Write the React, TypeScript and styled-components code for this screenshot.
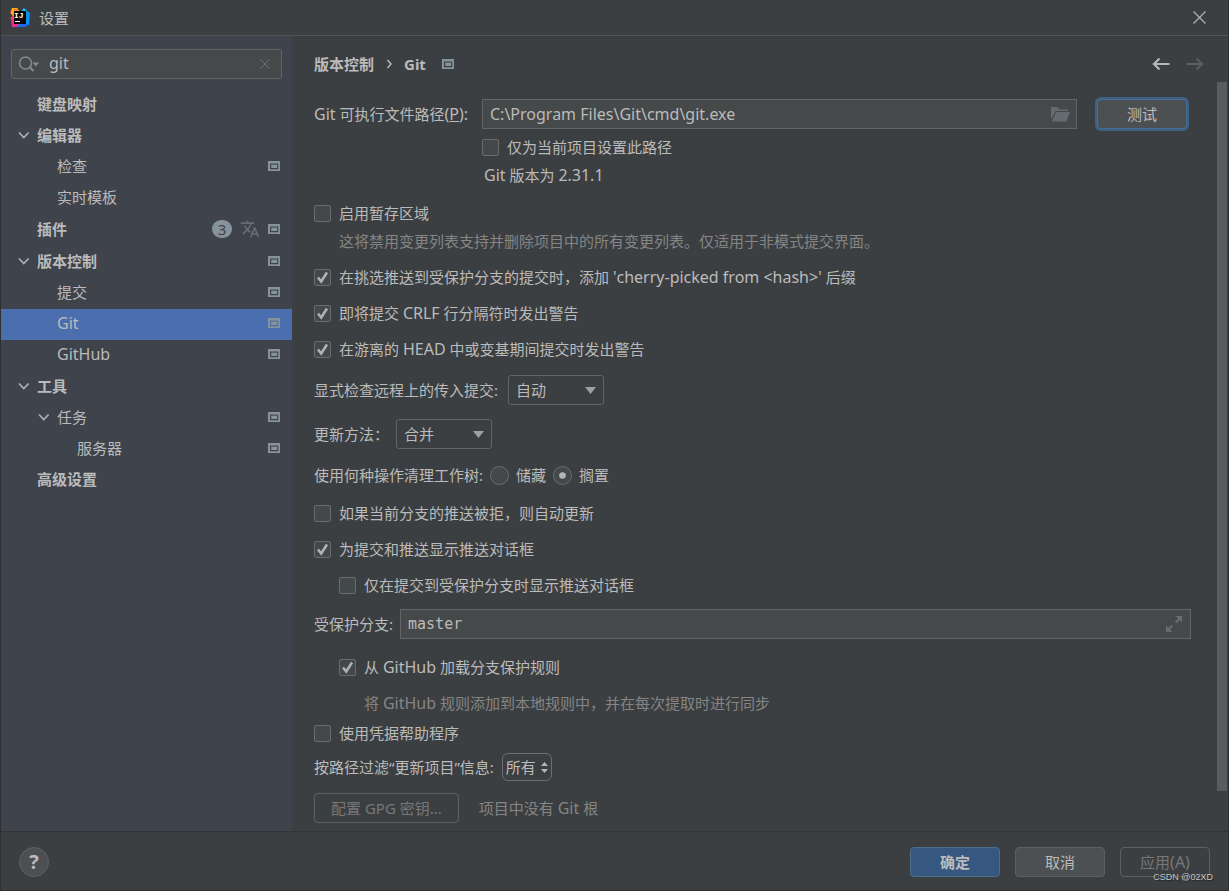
import React, { useId } from "react";
import styled, { createGlobalStyle } from "styled-components";
import { MdTranslate } from "react-icons/md";

const color = {
  bg: "#3c3f41",
  side: "#3f434c",
  field: "#45494a",
  border: "#646464",
  edge: "#2d2f30",
  text: "#bbbbbb",
  muted: "#858585",
  disabled: "#777777",
  icon: "#87939a",
  select: "#4b6eaf",
};

const GlobalStyle = createGlobalStyle`
  *, *::before, *::after { box-sizing: border-box; }
  body {
    margin: 0;
    background: ${color.bg};
    color: ${color.text};
    font-family: "Noto Sans", "Noto Sans CJK SC", sans-serif;
    font-size: 15px;
    line-height: 24px;
  }
  button, input, select { font: inherit; color: inherit; margin: 0; }
`;

const Window = styled.div`
  display: flex;
  flex-direction: column;
  min-height: 100vh;
  border: 1px solid ${color.edge};
  border-top: 0;
`;

const TitleBar = styled.header`
  display: flex;
  align-items: center;
  gap: 8px;
  height: 36px;
  padding: 0 22px 0 8px;
  border-bottom: 1px solid #515355;
`;

const Title = styled.h1`
  flex: 1;
  margin: 0;
  font-size: 15px;
  font-weight: 400;
`;

const IconButton = styled.button`
  display: flex;
  align-items: center;
  justify-content: center;
  padding: 0;
  border: 0;
  background: none;
`;

const Body = styled.div`
  display: flex;
  flex: 1;
`;

const Sidebar = styled.aside`
  flex: none;
  width: 291px;
  padding: 13px 0;
  background: ${color.side};
`;

const SearchBox = styled.div`
  display: flex;
  align-items: center;
  gap: 9px;
  height: 30px;
  margin: 0 10px 11px;
  padding: 0 11px 0 6px;
  border: 1px solid ${color.border};
  border-radius: 3px;
  background: ${color.field};
`;

const SearchInput = styled.input`
  flex: 1;
  min-width: 0;
  padding: 0 0 2px;
  border: 0;
  outline: 0;
  background: none;
  font-size: 16px;
`;

const Tree = styled.nav`
  display: flex;
  flex-direction: column;
  gap: 1px;
`;

const TreeRow = styled.a<{ $level: number; $bold?: boolean; $active?: boolean }>`
  display: flex;
  align-items: center;
  gap: 8px;
  height: 31px;
  padding: 0 12px 3px ${(p) => 16 + p.$level * 20}px;
  background: ${(p) => (p.$active ? color.select : "transparent")};
  color: inherit;
  font-weight: ${(p) => (p.$bold ? 700 : 400)};
  text-decoration: none;
`;

const TreeArrow = styled.span`
  display: flex;
  width: 12px;
`;

const TreeLabel = styled.span`
  flex: 1;
`;

const Latin = styled.span`
  font-size: 16px;
  line-height: 1;
`;

const CountBadge = styled.span`
  width: 20px;
  height: 18px;
  border-radius: 9px;
  background: ${color.icon};
  color: ${color.side};
  font-weight: 400;
  line-height: 18px;
  text-align: center;
`;

const Main = styled.main`
  display: flex;
  flex: 1;
  flex-direction: column;
  min-width: 0;
`;

const MainHeader = styled.div`
  display: flex;
  align-items: center;
  justify-content: space-between;
  height: 46px;
  padding: 10px 24px 0 22px;
`;

const Breadcrumb = styled.h2`
  display: flex;
  align-items: center;
  gap: 12px;
  margin: 0;
  font-size: 15px;
  font-weight: 700;

  svg:last-child { margin-left: 4px; }
`;

const NavButtons = styled.div`
  display: flex;
  gap: 16px;
`;

const ScrollArea = styled.div`
  display: flex;
  flex: 1;
`;

const ScrollThumb = styled.div`
  flex: none;
  width: 10px;
  height: calc(100% - 40px);
  margin-right: 1px;
  background: #595b5d;
`;

const Form = styled.form`
  display: flex;
  flex: 1;
  flex-direction: column;
  min-width: 0;
  padding: 17px 26px 8px 22px;
`;

const Row = styled.div<{ $top?: number; $indent?: number; $gap?: number }>`
  display: flex;
  align-items: center;
  gap: ${(p) => p.$gap ?? 8}px;
  min-height: 24px;
  margin-top: ${(p) => p.$top ?? 12}px;
  margin-left: ${(p) => p.$indent ?? 0}px;
`;

const PathLabel = styled.label`
  width: 160px;
`;

const Hint = styled.span`
  color: ${color.muted};
`;

const Field = styled.div<{ $end?: number }>`
  display: flex;
  flex: 1;
  align-items: center;
  height: 30px;
  padding: 0 ${(p) => p.$end ?? 8}px 0 7px;
  border: 1px solid ${color.border};
  background: ${color.field};
`;

const FieldInput = styled.input<{ $mono?: boolean }>`
  flex: 1;
  min-width: 0;
  padding: 0;
  border: 0;
  outline: 0;
  background: none;
  font-family: ${(p) => (p.$mono ? '"DejaVu Sans Mono", monospace' : "inherit")};
  font-size: ${(p) => (p.$mono ? 15 : 16)}px;
`;

const Button = styled.button<{ $kind?: "primary" | "focused" }>`
  min-width: 90px;
  height: 30px;
  padding: 0 16px;
  border: 1px solid ${(p) => (p.$kind === "primary" ? "#4c708c" : p.$kind === "focused" ? "#466d94" : "#5e6060")};
  border-radius: 4px;
  background: ${(p) => (p.$kind === "primary" ? "#365880" : "#4c5052")};
  box-shadow: ${(p) => (p.$kind === "focused" ? "0 0 0 2px #3d6185" : "none")};
  font-weight: ${(p) => (p.$kind === "primary" ? 700 : 400)};
  line-height: 22px;

  &:disabled {
    background: none;
    color: ${color.disabled};
  }
`;

const TestButton = styled(Button)`
  margin: 0 4px 0 12px;
`;

const Option = styled.label<{ $gap?: number }>`
  display: flex;
  align-items: center;
  gap: ${(p) => p.$gap ?? 8}px;
`;

const Mark = styled.span`
  display: grid;
  place-items: center;

  > * { grid-area: 1 / 1; }
  svg { visibility: hidden; pointer-events: none; }
  input:checked + svg { visibility: visible; }
`;

const MarkInput = styled.input`
  appearance: none;
  width: ${(p) => (p.type === "radio" ? 19 : 17)}px;
  height: ${(p) => (p.type === "radio" ? 19 : 17)}px;
  border: 1px solid #6b6b6b;
  border-radius: ${(p) => (p.type === "radio" ? "50%" : "2px")};
  background: #43494a;
`;

const SelectWrap = styled.span`
  display: grid;
  align-items: center;
  justify-items: end;

  > * { grid-area: 1 / 1; }
  svg { pointer-events: none; margin-right: 8px; }
`;

const Select = styled.select`
  appearance: none;
  width: 96px;
  height: 30px;
  padding: 0 7px;
  border: 1px solid ${color.border};
  border-radius: 3px;
  background: ${color.bg};
`;

const CompactWrap = styled(SelectWrap)`
  svg { margin-right: 4px; }
`;

const CompactSelect = styled(Select)`
  width: 50px;
  height: 28px;
  padding: 0 3px;
  border-color: #6e6e6e;
  border-radius: 6px;
`;

const Footer = styled.footer`
  display: flex;
  align-items: center;
  gap: 15px;
  padding: 15px 18px 13px;
  border-top: 1px solid #323436;
`;

const HelpButton = styled.button`
  width: 30px;
  height: 30px;
  margin-right: auto;
  padding: 0;
  border: 1px solid #5e6060;
  border-radius: 50%;
  background: #4c5052;
  font-size: 20px;
  font-weight: 700;
  line-height: 26px;
`;

const Watermark = styled.span`
  position: absolute;
  right: 16px;
  bottom: 8px;
  color: #c6c6c6;
  font-family: "Liberation Sans", Arial, sans-serif;
  font-size: 9px;
  line-height: 12px;
  text-shadow: 1px 1px 1px #222;
`;

const Logo = () => (
  <svg width="22" height="22" viewBox="0 0 22 22" aria-hidden="true">
    <path d="M3 1 8 1 12 6 8 18 3 17 4 13 1 11 4 9 1 6z" fill="#fc4b48" />
    <path d="M3 1 8 1 11 5 4 9 2 6z" fill="#fdb60d" />
    <path d="M5 2 9 2 8 6 4 8z" fill="#ff7a36" />
    <path d="M2 12 7 12 13 20 3 20z" fill="#ef2f8c" />
    <path d="M12 4 15 1 18 4 21 6 20 18 13 20 8 20 12 14z" fill="#0b8ff2" />
    <path d="M13 4 15 1 18 5z" fill="#19c5e8" />
    <path d="M8 20 12 17 20 17 16 20z" fill="#1769f3" />
    <rect x="5" y="4" width="12" height="13" fill="#0a0506" />
    <rect x="6" y="14" width="5" height="1" fill="#fff" />
    <text x="5" y="11" fill="#fff" fontFamily="Liberation Mono, monospace" fontSize="8" fontWeight="700">IJ</text>
  </svg>
);

const CloseIcon = ({ size = 12, stroke = "#b0b2b4" }) => (
  <svg width={size} height={size} viewBox="0 0 12 12" stroke={stroke} fill="none" aria-hidden="true">
    <path d="M.5.5l11 11M11.5.5l-11 11" strokeWidth="1.1" />
  </svg>
);

const SearchIcon = () => (
  <svg width="22" height="18" viewBox="0 0 22 18" fill="none" aria-hidden="true">
    <circle cx="7.500" cy="8" r="6" stroke="#7f8b91" strokeWidth="1.6" />
    <path d="M11.500 12l4 4" stroke="#7f8b91" strokeWidth="2.200" />
    <path d="M14.500 7.500h6.500l-3.200 4z" fill="#7f8b91" />
  </svg>
);

const ProjectIcon = () => (
  <svg width="12" height="10" viewBox="0 0 12 10" fill={color.icon} aria-hidden="true">
    <path fillRule="evenodd" d="M0 0h12v10H0zM2 2.400v5.800h8.300v-5.800z" />
    <path d="M3.200 3.600h6v3.400h-6z" />
  </svg>
);

const ArrowDown = () => (
  <svg width="12" height="8" viewBox="0 0 12 8" fill="none" overflow="visible" aria-hidden="true">
    <path d="M2 1.500l4.800 5 4.800-5" stroke="#afb1b3" strokeWidth="1.700" />
  </svg>
);

const Crumb = () => (
  <svg width="6" height="10" viewBox="0 0 6 10" fill="none" aria-hidden="true">
    <path d="M1.500 1l3.500 4L1.500 9" stroke="#bbb" strokeWidth="1.400" />
  </svg>
);

const BackArrow = () => (
  <svg width="18" height="14" viewBox="0 0 18 14" fill="none" stroke="#b4b6b8" strokeWidth="2.200" aria-hidden="true">
    <path d="M17.500 7H2.500M7.500 1.500L2 7l5.500 5.500" />
  </svg>
);

const ForwardArrow = () => (
  <svg width="18" height="14" viewBox="0 0 18 14" fill="none" stroke="#5b5d5f" strokeWidth="2.200" aria-hidden="true">
    <path d="M.5 7h15M10.500 1.500L16 7l-5.500 5.500" />
  </svg>
);

const FolderIcon = () => (
  <svg width="19" height="15" viewBox="0 0 19 15" fill="#656c6f" aria-hidden="true">
    <path d="M0 0h6.500l2 2.500H17V4H4.500L0 12.500z" />
    <path d="M5.200 5H19l-3.500 9.500H.8z" />
  </svg>
);

const ExpandIcon = () => (
  <svg width="16" height="16" viewBox="0 0 16 16" fill="#666c6f" aria-hidden="true">
    <path d="M9.500 0H16v6.500l-2.300-2.300-3.200 3.100-1.600-1.600 3.100-3.200z" />
    <path d="M6.500 16H0V9.500l2.300 2.300 3.200-3.100 1.600 1.600-3.100 3.200z" />
  </svg>
);

const CheckMark = () => (
  <svg width="13" height="13" viewBox="0 0 13 13" fill="none" aria-hidden="true">
    <path d="M2 6.500l3.200 4L11 1.500" stroke="#b0b2b2" strokeWidth="2.500" />
  </svg>
);

const RadioDot = () => (
  <svg width="7" height="7" viewBox="0 0 7 7" aria-hidden="true">
    <circle cx="3.500" cy="3.500" r="3.300" fill="#b4b6b6" />
  </svg>
);

const SelectArrow = () => (
  <svg width="11" height="7" viewBox="0 0 11 7" fill="#9da0a2" aria-hidden="true">
    <path d="M0 0h11L5.500 7z" />
  </svg>
);

const UpDown = () => (
  <svg width="7" height="11" viewBox="0 0 7 11" fill="#b4b6b8" aria-hidden="true">
    <path d="M0 4h7L3.500 0zM0 7h7l-3.500 4z" />
  </svg>
);

// Latin runs are set one size up so they balance with the Chinese glyphs.
const Mixed = ({ text }: { text: string }) => (
  <span>
    {text.split(/([!-~](?:[ -~]*[!-~])?)/).map((part, i) => (i % 2 ? <Latin key={i}>{part}</Latin> : part))}
  </span>
);

type Node = { label: string; level: number; open?: boolean; scope?: boolean; bold?: boolean; count?: number };

const groups: Node[][] = [
  [
    { label: "键盘映射", level: 0, bold: true },
    { label: "编辑器", level: 0, bold: true, open: true },
    { label: "检查", level: 1, scope: true },
    { label: "实时模板", level: 1 },
  ],
  [{ label: "插件", level: 0, bold: true, scope: true, count: 3 }],
  [
    { label: "版本控制", level: 0, bold: true, open: true, scope: true },
    { label: "提交", level: 1, scope: true },
    { label: "Git", level: 1, scope: true },
    { label: "GitHub", level: 1, scope: true },
  ],
  [
    { label: "工具", level: 0, bold: true, open: true },
    { label: "任务", level: 1, open: true, scope: true },
    { label: "服务器", level: 2, scope: true },
    { label: "高级设置", level: 0, bold: true },
  ],
];

const Check = ({ label, on }: { label: string; on?: boolean }) => (
  <Option>
    <Mark>
      <MarkInput type="checkbox" defaultChecked={on} />
      <CheckMark />
    </Mark>
    <Mixed text={label} />
  </Option>
);

const Radio = ({ label, on }: { label: string; on?: boolean }) => (
  <Option $gap={7}>
    <Mark>
      <MarkInput type="radio" name="clean" defaultChecked={on} />
      <RadioDot />
    </Mark>
    {label}
  </Option>
);

const LabeledSelect = ({ label, value, top, gap }: { label: string; value: string; top: number; gap: number }) => {
  const id = useId();
  return (
    <Row $top={top} $gap={gap}>
      <label htmlFor={id}>{label}</label>
      <SelectWrap>
        <Select id={id} defaultValue={value}>
          <option>{value}</option>
        </Select>
        <SelectArrow />
      </SelectWrap>
    </Row>
  );
};

export default function App() {
  return (
    <Window>
      <GlobalStyle />
      <TitleBar>
        <Logo />
        <Title>设置</Title>
        <IconButton aria-label="关闭"><CloseIcon size={13} /></IconButton>
      </TitleBar>
      <Body>
        <Sidebar>
          <SearchBox>
            <SearchIcon />
            <SearchInput aria-label="搜索设置" defaultValue="git" />
            <IconButton aria-label="清除"><CloseIcon size={10} stroke="#72777a" /></IconButton>
          </SearchBox>
          <Tree>
            {groups.map((group) => (
              <div key={group[0].label}>
                {group.map((n) => (
                  <TreeRow key={n.label} href="#" $level={n.level} $bold={n.bold} $active={n.label === "Git"}>
                    <TreeArrow>{n.open && <ArrowDown />}</TreeArrow>
                    <TreeLabel><Mixed text={n.label} /></TreeLabel>
                    {n.count && <CountBadge>{n.count}</CountBadge>}
                    {n.count && <MdTranslate size={20} color="#686e75" />}
                    {n.scope && <ProjectIcon />}
                  </TreeRow>
                ))}
              </div>
            ))}
          </Tree>
        </Sidebar>
        <Main>
          <MainHeader>
            <Breadcrumb>
              版本控制
              <Crumb />
              Git
              <ProjectIcon />
            </Breadcrumb>
            <NavButtons>
              <IconButton aria-label="后退"><BackArrow /></IconButton>
              <IconButton aria-label="前进"><ForwardArrow /></IconButton>
            </NavButtons>
          </MainHeader>
          <ScrollArea>
            <Form onSubmit={(e) => e.preventDefault()}>
              <Row $top={0}>
                <PathLabel htmlFor="git-path"><Latin>Git</Latin> 可执行文件路径<Latin>(<u>P</u>):</Latin></PathLabel>
                <Field $end={6}>
                  <FieldInput id="git-path" defaultValue="C:\Program Files\Git\cmd\git.exe" />
                  <FolderIcon />
                </Field>
                <TestButton type="button" $kind="focused">测试</TestButton>
              </Row>
              <Row $top={6} $indent={168}><Check label="仅为当前项目设置此路径" /></Row>
              <Row $top={4} $indent={170}><Mixed text="Git 版本为 2.31.1" /></Row>
              <Row $top={14}><Check label="启用暂存区域" /></Row>
              <Row $top={4} $indent={25}><Hint>这将禁用变更列表支持并删除项目中的所有变更列表。仅适用于非模式提交界面。</Hint></Row>
              <Row><Check on label="在挑选推送到受保护分支的提交时，添加 'cherry-picked from <hash>' 后缀" /></Row>
              <Row><Check on label="即将提交 CRLF 行分隔符时发出警告" /></Row>
              <Row><Check on label="在游离的 HEAD 中或变基期间提交时发出警告" /></Row>
              <LabeledSelect top={14} gap={10} label="显式检查远程上的传入提交:" value="自动" />
              <LabeledSelect top={14} gap={7} label="更新方法：" value="合并" />
              <Row $top={14} $gap={7} role="radiogroup" aria-label="使用何种操作清理工作树">
                <span>使用何种操作清理工作树:</span>
                <Radio label="储藏" />
                <Radio on label="搁置" />
              </Row>
              <Row $top={14}><Check label="如果当前分支的推送被拒，则自动更新" /></Row>
              <Row><Check on label="为提交和推送显示推送对话框" /></Row>
              <Row $indent={25}><Check label="仅在提交到受保护分支时显示推送对话框" /></Row>
              <Row $gap={7}>
                <label htmlFor="protected">受保护分支:</label>
                <Field>
                  <FieldInput id="protected" $mono defaultValue="master" />
                  <ExpandIcon />
                </Field>
              </Row>
              <Row $top={16} $indent={25}><Check on label="从 GitHub 加载分支保护规则" /></Row>
              <Row $indent={50}><Hint><Mixed text="将 GitHub 规则添加到本地规则中，并在每次提取时进行同步" /></Hint></Row>
              <Row $top={6}><Check label="使用凭据帮助程序" /></Row>
              <Row $top={8}>
                <label htmlFor="filter">按路径过滤“更新项目”信息:</label>
                <CompactWrap>
                  <CompactSelect id="filter" defaultValue="所有"><option>所有</option></CompactSelect>
                  <UpDown />
                </CompactWrap>
              </Row>
              <Row $gap={20}>
                <Button type="button" disabled>配置 GPG 密钥...</Button>
                <Hint><Mixed text="项目中没有 Git 根" /></Hint>
              </Row>
            </Form>
            <ScrollThumb />
          </ScrollArea>
        </Main>
      </Body>
      <Footer>
        <HelpButton aria-label="帮助">?</HelpButton>
        <Button $kind="primary">确定</Button>
        <Button>取消</Button>
        <Button disabled><Mixed text="应用(A)" /></Button>
      </Footer>
      <Watermark>CSDN @02XD</Watermark>
    </Window>
  );
}
